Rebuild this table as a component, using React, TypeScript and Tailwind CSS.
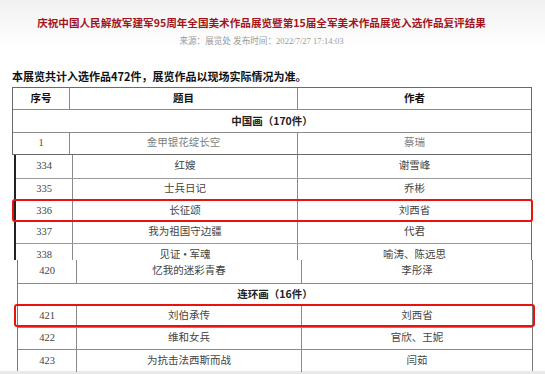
import React from "react";

const serif = { fontFamily: '"Liberation Serif", "Noto Sans CJK SC", serif' };

type Row = { n: string; t: string; a: string; h: string };

function DataRow({
  r,
  c1,
  c2,
  line,
  vline,
  last,
  clip,
  children,
}: {
  r: Row;
  c1: string;
  c2: string;
  line: string;
  vline: string;
  last?: boolean;
  clip?: string;
  children?: React.ReactNode;
}) {
  const inner = (
    <div className={`relative flex shrink-0 ${r.h} ${last ? "" : "border-b " + line}`}>
      <div className={`${c1} border-r ${vline} flex items-center justify-center`}>{r.n}</div>
      <div className={`${c2} border-r ${vline} flex items-center justify-center`}>{r.t}</div>
      <div className="flex-1 flex items-center justify-center">{r.a}</div>
      {children}
    </div>
  );
  if (clip) return <div className={`${clip} shrink-0 overflow-hidden`}>{inner}</div>;
  return inner;
}

export default function App() {
  return (
    <div
      className="w-[545px] h-[374px] bg-white overflow-hidden flex flex-col"
      style={{ fontFamily: '"Noto Sans CJK SC", "Noto Sans", sans-serif' }}
    >
      {/* header */}
      <div className="flex flex-col bg-gradient-to-b from-[#f1f1f1] to-white pt-[12px] pr-[22px] h-[48px] shrink-0">
        <div className="h-[22px] flex items-center justify-center text-[10.6px] font-bold text-[#a3151c] leading-none">
          庆祝中国人民解放军建军95周年全国美术作品展览暨第15届全军美术作品展览入选作品复评结果
        </div>
        <div
          className="h-[14px] flex items-center justify-center text-[8.6px] text-[#9a9a9a] leading-none"
          style={serif}
        >
          来源：展览处&nbsp;发布时间：2022/7/27&nbsp;17:14:03
        </div>
      </div>

      <div className="mt-[20px] h-[16px] shrink-0 pl-[12px] flex items-center text-[11px] font-bold text-[#111] leading-none">
        本展览共计入选作品472件，展览作品以现场实际情况为准。
      </div>

      {/* segment 1 */}
      <div className="mt-[3px] ml-[12px] w-[520px] shrink-0 border border-[#6a6a6a] flex flex-col text-[10.5px] leading-none">
        <div className="flex h-[22px] border-b border-[#8a8a8a] font-bold text-[#111]">
          <div className="w-[57px] border-r border-[#8a8a8a] flex items-center justify-center">序号</div>
          <div className="w-[228px] border-r border-[#8a8a8a] flex items-center justify-center">题目</div>
          <div className="flex-1 flex items-center justify-center">作者</div>
        </div>
        <div className="h-[23px] border-b border-[#8a8a8a] flex items-center justify-center font-bold text-[#222]">
          中国画（170件）
        </div>
        <div className="flex h-[21px] text-[#808080]" style={serif}>
          <div className="w-[57px] border-r border-[#8a8a8a] flex items-center justify-center text-[#8b3a1a]">1</div>
          <div className="w-[228px] border-r border-[#8a8a8a] flex items-center justify-center">金甲银花绽长空</div>
          <div className="flex-1 flex items-center justify-center">蔡瑞</div>
        </div>
      </div>

      {/* segment 2 */}
      <div
        className="ml-[14px] w-[518px] h-[105px] shrink-0 border-l-2 border-l-[#222] border-r border-r-[#6a6a6a] flex flex-col text-[10.5px] leading-none text-[#444]"
        style={serif}
      >
        <DataRow r={{ n: "334", t: "红嫂", a: "谢雪峰", h: "h-[24px]" }} c1="w-[57px]" c2="w-[225px]" line="border-[#9a9a9a]" vline="border-[#8a8a8a]" />
        <DataRow r={{ n: "335", t: "士兵日记", a: "乔彬", h: "h-[22px]" }} c1="w-[57px]" c2="w-[225px]" line="border-[#9a9a9a]" vline="border-[#8a8a8a]" />
        <DataRow r={{ n: "336", t: "长征颂", a: "刘西省", h: "h-[21px]" }} c1="w-[57px]" c2="w-[225px]" line="border-[#9a9a9a]" vline="border-[#8a8a8a]">
          <div className="absolute left-[-4px] right-[-2px] top-[-2px] bottom-[-1px] border-2 border-[#e8120f] rounded-[3px]" />
        </DataRow>
        <DataRow r={{ n: "337", t: "我为祖国守边疆", a: "代君", h: "h-[22px]" }} c1="w-[57px]" c2="w-[225px]" line="border-[#9a9a9a]" vline="border-[#8a8a8a]" />
        <DataRow r={{ n: "338", t: "见证 • 军魂", a: "喻涛、陈远思", h: "h-[22px]" }} c1="w-[57px]" c2="w-[225px]" line="border-[#9a9a9a]" vline="border-[#8a8a8a]" last clip="h-[16px]" />
      </div>

      {/* segment 3 */}
      <div
        className="ml-[17px] w-[516px] h-[111px] shrink-0 border-l border-r border-[#7a7a7a] flex flex-col text-[10.5px] leading-none text-[#444]"
        style={serif}
      >
        <DataRow r={{ n: "420", t: "忆我的迷彩青春", a: "李彤泽", h: "h-[24px]" }} c1="w-[59px]" c2="w-[225px]" line="border-[#8a8a8a]" vline="border-[#8a8a8a]" />
        <div
          className="h-[21px] shrink-0 border-b border-[#8a8a8a] flex items-center justify-center font-bold text-[#222]"
          style={{ fontFamily: '"Noto Sans CJK SC", sans-serif' }}
        >
          连环画（16件）
        </div>
        <DataRow r={{ n: "421", t: "刘伯承传", a: "刘西省", h: "h-[23px]" }} c1="w-[59px]" c2="w-[225px]" line="border-[#8a8a8a]" vline="border-[#8a8a8a]">
          <div className="absolute left-[-4px] right-[-3px] top-[-1px] bottom-0 border-2 border-[#e8120f] rounded-[3px]" />
        </DataRow>
        <DataRow r={{ n: "422", t: "维和女兵", a: "官欣、王妮", h: "h-[22px]" }} c1="w-[59px]" c2="w-[225px]" line="border-[#8a8a8a]" vline="border-[#8a8a8a]" />
        <DataRow r={{ n: "423", t: "为抗击法西斯而战", a: "闫茹", h: "h-[22px]" }} c1="w-[59px]" c2="w-[225px]" line="border-[#8a8a8a]" vline="border-[#8a8a8a]" last />
      </div>

      <div className="flex-1 bg-[#e9e9e9]" />
    </div>
  );
}
